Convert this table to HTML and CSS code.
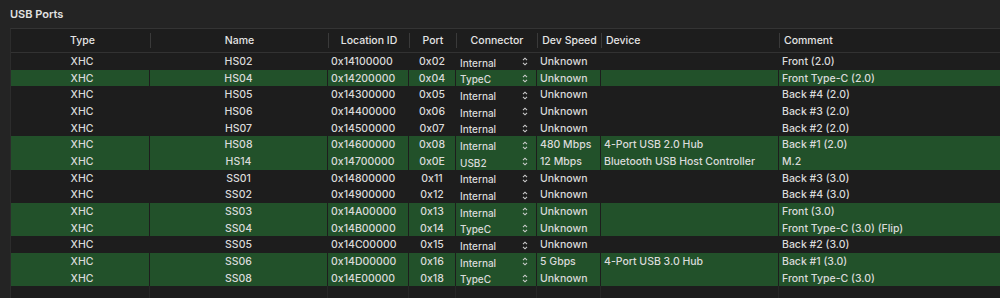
FILE: index.html
```html
<!DOCTYPE html>
<html>
<head>
<meta charset="utf-8">
<link rel="stylesheet" href="styles.css">
</head>
<body>
<div class="panel">
  <div class="title">USB Ports</div>
  <div class="table">
    <div class="head">
      <div class="h c first">Type</div>
      <div class="h c sep">Name</div>
      <div class="h c sep">Location ID</div>
      <div class="h c sep">Port</div>
      <div class="h c sep">Connector</div>
      <div class="h c sep">Dev Speed</div>
      <div class="h l sep">Device</div>
      <div class="h l sep">Comment</div>
    </div>
    <div class="rows">
      <div class="row"><div class="c">XHC</div><div class="c">HS02</div><div>0x14100000</div><div class="c">0x02</div><div class="pop"><span>Internal</span><svg class="step" viewBox="0 0 6 9"><path d="M1 3.2 3 1.2 5 3.2M1 5.8 3 7.8 5 5.8"/></svg></div><div>Unknown</div><div></div><div>Front (2.0)</div></div>
      <div class="row on"><div class="c">XHC</div><div class="c">HS04</div><div>0x14200000</div><div class="c">0x04</div><div class="pop"><span>TypeC</span><svg class="step" viewBox="0 0 6 9"><path d="M1 3.2 3 1.2 5 3.2M1 5.8 3 7.8 5 5.8"/></svg></div><div>Unknown</div><div></div><div>Front Type-C (2.0)</div></div>
      <div class="row"><div class="c">XHC</div><div class="c">HS05</div><div>0x14300000</div><div class="c">0x05</div><div class="pop"><span>Internal</span><svg class="step" viewBox="0 0 6 9"><path d="M1 3.2 3 1.2 5 3.2M1 5.8 3 7.8 5 5.8"/></svg></div><div>Unknown</div><div></div><div>Back #4 (2.0)</div></div>
      <div class="row"><div class="c">XHC</div><div class="c">HS06</div><div>0x14400000</div><div class="c">0x06</div><div class="pop"><span>Internal</span><svg class="step" viewBox="0 0 6 9"><path d="M1 3.2 3 1.2 5 3.2M1 5.8 3 7.8 5 5.8"/></svg></div><div>Unknown</div><div></div><div>Back #3 (2.0)</div></div>
      <div class="row"><div class="c">XHC</div><div class="c">HS07</div><div>0x14500000</div><div class="c">0x07</div><div class="pop"><span>Internal</span><svg class="step" viewBox="0 0 6 9"><path d="M1 3.2 3 1.2 5 3.2M1 5.8 3 7.8 5 5.8"/></svg></div><div>Unknown</div><div></div><div>Back #2 (2.0)</div></div>
      <div class="row on"><div class="c">XHC</div><div class="c">HS08</div><div>0x14600000</div><div class="c">0x08</div><div class="pop"><span>Internal</span><svg class="step" viewBox="0 0 6 9"><path d="M1 3.2 3 1.2 5 3.2M1 5.8 3 7.8 5 5.8"/></svg></div><div>480 Mbps</div><div>4-Port USB 2.0 Hub</div><div>Back #1 (2.0)</div></div>
      <div class="row on"><div class="c">XHC</div><div class="c">HS14</div><div>0x14700000</div><div class="c">0x0E</div><div class="pop"><span>USB2</span><svg class="step" viewBox="0 0 6 9"><path d="M1 3.2 3 1.2 5 3.2M1 5.8 3 7.8 5 5.8"/></svg></div><div>12 Mbps</div><div>Bluetooth USB Host Controller</div><div>M.2</div></div>
      <div class="row"><div class="c">XHC</div><div class="c">SS01</div><div>0x14800000</div><div class="c">0x11</div><div class="pop"><span>Internal</span><svg class="step" viewBox="0 0 6 9"><path d="M1 3.2 3 1.2 5 3.2M1 5.8 3 7.8 5 5.8"/></svg></div><div>Unknown</div><div></div><div>Back #3 (3.0)</div></div>
      <div class="row"><div class="c">XHC</div><div class="c">SS02</div><div>0x14900000</div><div class="c">0x12</div><div class="pop"><span>Internal</span><svg class="step" viewBox="0 0 6 9"><path d="M1 3.2 3 1.2 5 3.2M1 5.8 3 7.8 5 5.8"/></svg></div><div>Unknown</div><div></div><div>Back #4 (3.0)</div></div>
      <div class="row on"><div class="c">XHC</div><div class="c">SS03</div><div>0x14A00000</div><div class="c">0x13</div><div class="pop"><span>Internal</span><svg class="step" viewBox="0 0 6 9"><path d="M1 3.2 3 1.2 5 3.2M1 5.8 3 7.8 5 5.8"/></svg></div><div>Unknown</div><div></div><div>Front (3.0)</div></div>
      <div class="row on"><div class="c">XHC</div><div class="c">SS04</div><div>0x14B00000</div><div class="c">0x14</div><div class="pop"><span>TypeC</span><svg class="step" viewBox="0 0 6 9"><path d="M1 3.2 3 1.2 5 3.2M1 5.8 3 7.8 5 5.8"/></svg></div><div>Unknown</div><div></div><div>Front Type-C (3.0) (Flip)</div></div>
      <div class="row"><div class="c">XHC</div><div class="c">SS05</div><div>0x14C00000</div><div class="c">0x15</div><div class="pop"><span>Internal</span><svg class="step" viewBox="0 0 6 9"><path d="M1 3.2 3 1.2 5 3.2M1 5.8 3 7.8 5 5.8"/></svg></div><div>Unknown</div><div></div><div>Back #2 (3.0)</div></div>
      <div class="row on"><div class="c">XHC</div><div class="c">SS06</div><div>0x14D00000</div><div class="c">0x16</div><div class="pop"><span>Internal</span><svg class="step" viewBox="0 0 6 9"><path d="M1 3.2 3 1.2 5 3.2M1 5.8 3 7.8 5 5.8"/></svg></div><div>5 Gbps</div><div>4-Port USB 3.0 Hub</div><div>Back #1 (3.0)</div></div>
      <div class="row on"><div class="c">XHC</div><div class="c">SS08</div><div>0x14E00000</div><div class="c">0x18</div><div class="pop"><span>TypeC</span><svg class="step" viewBox="0 0 6 9"><path d="M1 3.2 3 1.2 5 3.2M1 5.8 3 7.8 5 5.8"/></svg></div><div>Unknown</div><div></div><div>Front Type-C (3.0)</div></div>
      <div class="row fill"><div></div><div></div><div></div><div></div><div></div><div></div><div></div><div></div></div>
    </div>
  </div>
</div>
</body>
</html>
```

FILE: styles.css
```css
html, body {
  margin: 0;
  padding: 0;
  background: #242424;
  overflow: hidden;
}
.panel {
  width: 1000px;
  height: 298px;
  display: flex;
  flex-direction: column;
  font-family: Inter, "Noto Sans", sans-serif;
  color: #dadada;
}
.title {
  height: 28px;
  padding-left: 10px;
  font-size: 11px;
  font-weight: 600;
  line-height: 28px;
  color: #e2e2e2;
  box-sizing: border-box;
}
.table {
  flex: 1;
  margin-left: 10px;
  width: 1010px;
  border-top: 1px solid #343434;
  border-left: 1px solid #2c2c2c;
  background: #1d1d1d;
  display: flex;
  flex-direction: column;
  min-height: 0;
}
.head {
  display: grid;
  grid-template-columns: 139px 178px 81px 47px 81px 64px 178px 1fr;
  height: 23px;
  border-bottom: 1px solid #323232;
  align-items: center;
  font-size: 10.5px;
  font-weight: 500;
  color: #e4e4e4;
}
.h {
  height: 14px;
  line-height: 14px;
  padding-top: 1px;
  white-space: nowrap;
}
.h.first {
  padding-left: 4px;
}
.h.sep {
  border-left: 1px solid #3a3a3a;
}
.h.l {
  padding-left: 4px;
}
.c {
  text-align: center;
}
.rows {
  flex: 1;
  display: flex;
  flex-direction: column;
  min-height: 0;
}
.row {
  display: grid;
  grid-template-columns: 138px 177px 80px 46px 80px 63px 177px 1fr;
  column-gap: 1px;
  height: 16.67px;
  font-size: 10.5px;
  font-weight: 500;
  line-height: 15.67px;
  flex: none;
}
.row > div {
  padding-left: 3px;
  padding-top: 1px;
  white-space: nowrap;
  overflow: hidden;
}
.row > div.c {
  padding-left: 0;
}
.row > div:first-child {
  padding-left: 4px;
}
.row.on > div {
  background: #22512a;
}
.pop {
  display: flex;
  align-items: center;
  justify-content: space-between;
  padding-right: 8px;
}
.pop span {
  font-size: 10px;
  line-height: 10px;
  padding-top: 2px;
  padding-left: 1px;
}
.step {
  width: 6px;
  height: 9px;
  fill: none;
  stroke: #cfcfcf;
  stroke-width: 1.1;
}
.row.fill {
  flex: 1;
  height: auto;
  background: #262626;
}
.row.fill > div {
  background: #1d1d1d;
}
```
